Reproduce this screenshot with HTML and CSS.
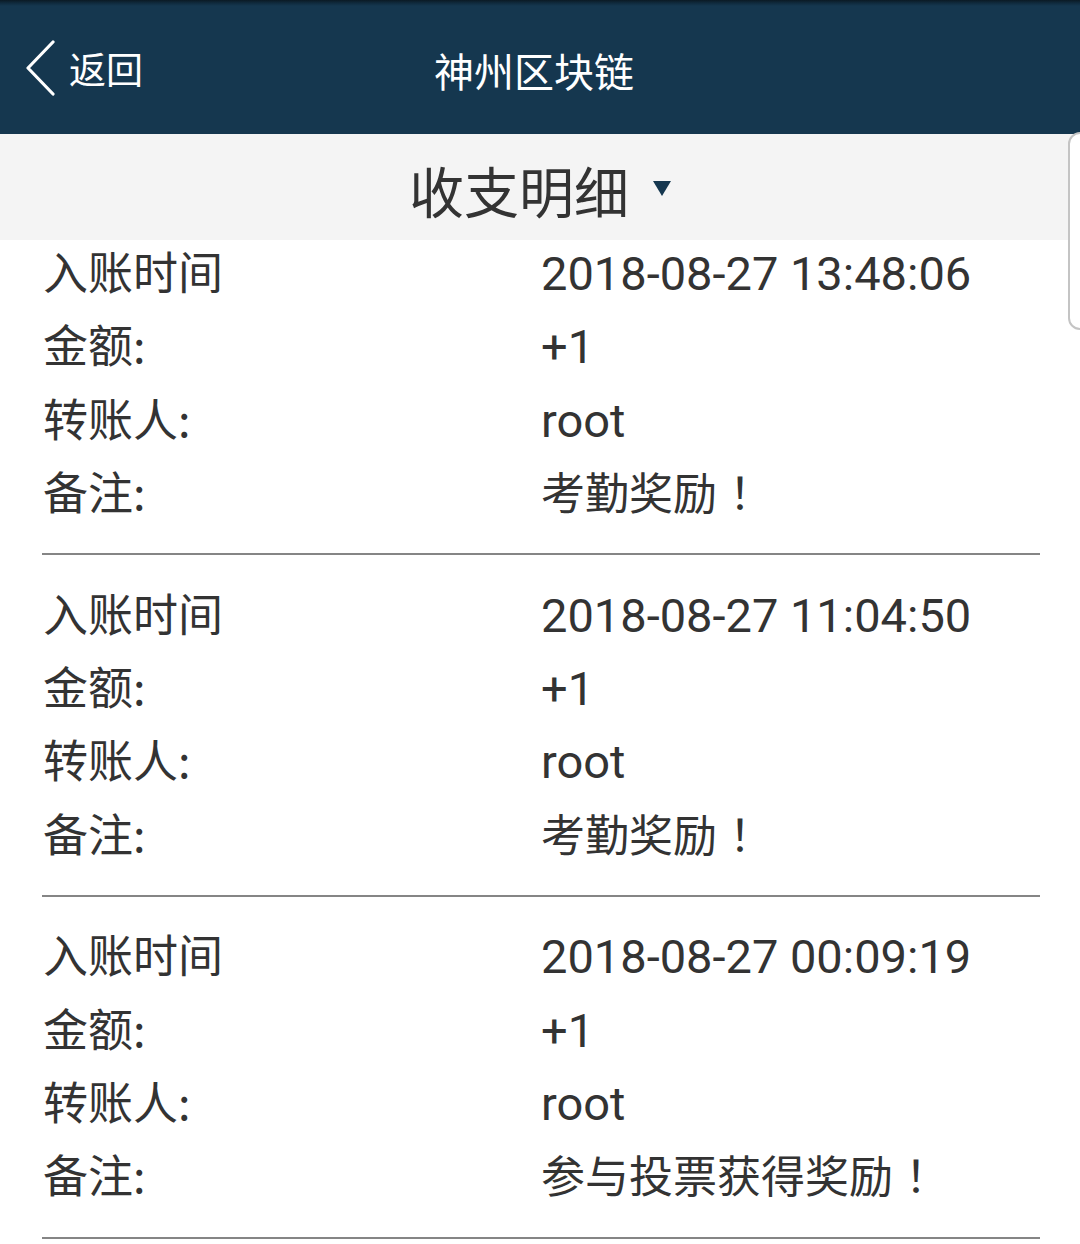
FILE: index.html
```html
<!DOCTYPE html>
<html lang="zh-CN">
<head>
<meta charset="utf-8">
<title>神州区块链</title>
<link rel="stylesheet" href="styles.css">
</head>
<body>
<div class="page">
  <header class="topbar">
    <a class="back">
      <svg class="back-icon" width="32" height="56" viewBox="0 0 32 56"><path d="M29 2 L4 28 L29 54" fill="none" stroke="#ffffff" stroke-width="3.2" stroke-linecap="round" stroke-linejoin="round"/></svg>
      <span class="back-text">返回</span>
    </a>
    <h1 class="title">神州区块链</h1>
  </header>
  <div class="subbar">
    <span class="subtitle">收支明细</span>
    <span class="caret"></span>
  </div>
  <div class="list">
    <div class="record">
      <div class="row"><span class="label">入账时间</span><span class="value">2018-08-27 13:48:06</span></div>
      <div class="row"><span class="label">金额:</span><span class="value">+1</span></div>
      <div class="row"><span class="label">转账人:</span><span class="value">root</span></div>
      <div class="row"><span class="label">备注:</span><span class="value note">考勤奖励<span class="bang">！</span></span></div>
    </div>
    <div class="record">
      <div class="row"><span class="label">入账时间</span><span class="value">2018-08-27 11:04:50</span></div>
      <div class="row"><span class="label">金额:</span><span class="value">+1</span></div>
      <div class="row"><span class="label">转账人:</span><span class="value">root</span></div>
      <div class="row"><span class="label">备注:</span><span class="value note">考勤奖励<span class="bang">！</span></span></div>
    </div>
    <div class="record">
      <div class="row"><span class="label">入账时间</span><span class="value">2018-08-27 00:09:19</span></div>
      <div class="row"><span class="label">金额:</span><span class="value">+1</span></div>
      <div class="row"><span class="label">转账人:</span><span class="value">root</span></div>
      <div class="row"><span class="label">备注:</span><span class="value note">参与投票获得奖励<span class="bang">！</span></span></div>
    </div>
  </div>
  <div class="scroll-handle"></div>
</div>
</body>
</html>
```

FILE: styles.css
```css
html, body {
  margin: 0;
  padding: 0;
  background: #ffffff;
}
body {
  font-family: Roboto, "Noto Sans CJK SC", "Noto Sans", sans-serif;
  color: #333333;
  overflow: hidden;
}
.page {
  position: relative;
  width: 1080px;
  height: 1244px;
  overflow: hidden;
}
.topbar {
  position: relative;
  height: 134px;
  background: linear-gradient(to bottom, #0b1a24 0px, #0f2a3d 3px, #15374f 6px, #15374f 100%);
  display: flex;
  align-items: center;
  justify-content: center;
}
.back {
  position: absolute;
  left: 24px;
  top: 40px;
  display: flex;
  align-items: center;
  color: #ffffff;
}
.back-icon {
  display: block;
}
.back-text {
  margin-left: 13px;
  font-size: 37px;
  line-height: 56px;
  font-family: "Noto Sans CJK SC", sans-serif;
  color: #ffffff;
}
.title {
  margin: 6px 12px 0 0;
  font-weight: normal;
  font-size: 40px;
  line-height: 56px;
  font-family: "Noto Sans CJK SC", sans-serif;
  color: #ffffff;
}
.subbar {
  height: 106px;
  background: #f4f4f4;
  display: flex;
  align-items: center;
  justify-content: center;
  position: relative;
  z-index: 1;
}
.subtitle {
  font-family: "Noto Sans CJK SC", sans-serif;
  font-size: 55px;
  line-height: 70px;
  color: #333333;
  margin-top: 4px;
}
.caret {
  width: 0;
  height: 0;
  border-left: 9px solid transparent;
  border-right: 9px solid transparent;
  border-top: 15px solid #15374f;
  margin-left: 24px;
  margin-top: 2px;
}
.list {
  margin-top: -3px;
  position: relative;
  z-index: 2;
}
.record {
  margin: 0 40px 23.5px 42px;
  padding-bottom: 23px;
  border-bottom: 2px solid #858585;
}
.row {
  display: flex;
  height: 73.3px;
  line-height: 73.3px;
}
.label {
  width: 498px;
  flex: none;
  font-family: "Noto Sans CJK SC", sans-serif;
  font-size: 45px;
  color: #333333;
  padding-left: 1px;
  margin-top: -3px;
}
.value {
  flex: 1;
  font-family: Roboto, "Noto Sans CJK SC", sans-serif;
  font-size: 47px;
  color: #333333;
}
.value.note {
  font-family: "Noto Sans CJK SC", sans-serif;
  font-size: 44px;
  margin-top: -2px;
}
.bang {
  margin-left: 12px;
}
.scroll-handle {
  position: absolute;
  left: 1068px;
  top: 132px;
  width: 30px;
  height: 194px;
  border: 2px solid #c4c4c4;
  border-radius: 12px;
  background: #ffffff;
  z-index: 3;
}
```
